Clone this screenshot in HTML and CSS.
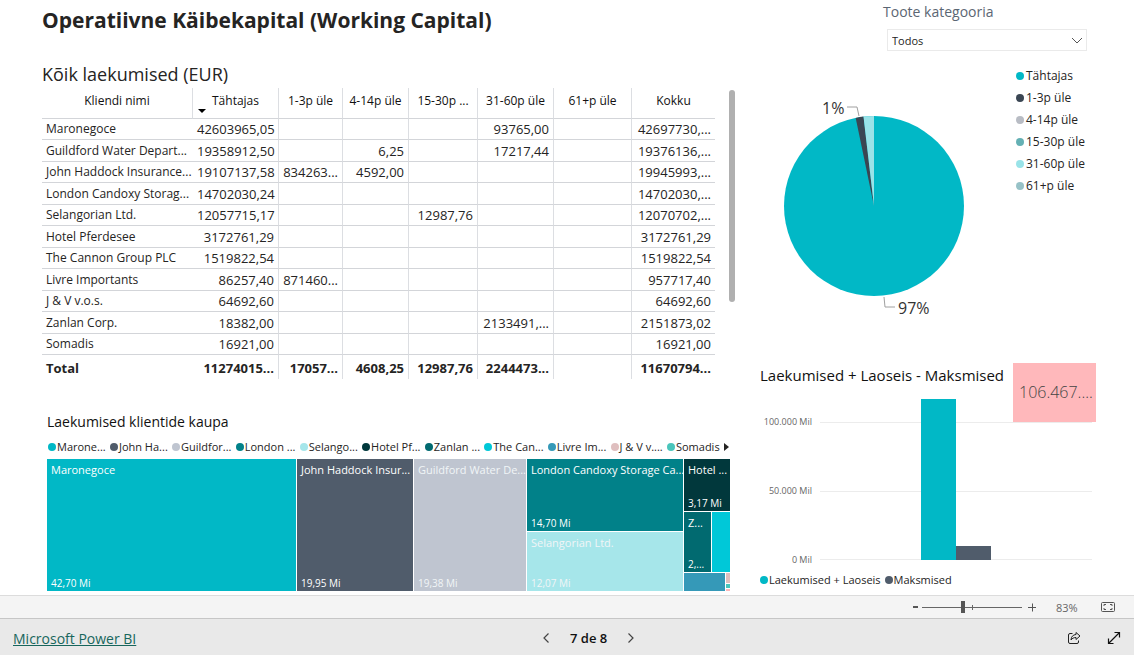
FILE: index.html
```html
<!DOCTYPE html>
<html lang="et">
<head>
<meta charset="utf-8">
<meta name="viewport" content="width=device-width, initial-scale=1">
<title>Operatiivne Käibekapital</title>
<link rel="stylesheet" href="styles.css">
</head>
<body>
<main class="report">
  <div class="col-main">
    <h1 class="report-title">Operatiivne Käibekapital (Working Capital)</h1>
    <section class="receipts">
      <h2 class="receipts-title">Kõik laekumised (EUR)</h2>
      <div class="receipts-body">
        <div class="matrix-wrap">
        <table class="matrix">
          <colgroup><col class="c-name"><col class="c-due"><col class="c-1"><col class="c-4"><col class="c-15"><col class="c-31"><col class="c-61"><col class="c-sum"></colgroup>
          <thead>
            <tr><th>Kliendi nimi</th><th class="sorted">Tähtajas<svg class="sort" viewBox="0 0 8 4" aria-hidden="true"><path d="M0 0h8L4 4z"/></svg></th><th>1-3p üle</th><th>4-14p üle</th><th>15-30p ...</th><th>31-60p üle</th><th>61+p üle</th><th>Kokku</th></tr>
          </thead>
          <tbody>
            <tr><td>Maronegoce</td><td>42603965,05</td><td></td><td></td><td></td><td>93765,00</td><td></td><td>42697730,...</td></tr>
            <tr><td>Guildford Water Depart...</td><td>19358912,50</td><td></td><td>6,25</td><td></td><td>17217,44</td><td></td><td>19376136,...</td></tr>
            <tr><td>John Haddock Insurance...</td><td>19107137,58</td><td>834263...</td><td>4592,00</td><td></td><td></td><td></td><td>19945993,...</td></tr>
            <tr><td>London Candoxy Storag...</td><td>14702030,24</td><td></td><td></td><td></td><td></td><td></td><td>14702030,...</td></tr>
            <tr><td>Selangorian Ltd.</td><td>12057715,17</td><td></td><td></td><td>12987,76</td><td></td><td></td><td>12070702,...</td></tr>
            <tr><td>Hotel Pferdesee</td><td>3172761,29</td><td></td><td></td><td></td><td></td><td></td><td>3172761,29</td></tr>
            <tr><td>The Cannon Group PLC</td><td>1519822,54</td><td></td><td></td><td></td><td></td><td></td><td>1519822,54</td></tr>
            <tr><td>Livre Importants</td><td>86257,40</td><td>871460...</td><td></td><td></td><td></td><td></td><td>957717,40</td></tr>
            <tr><td>J &amp; V v.o.s.</td><td>64692,60</td><td></td><td></td><td></td><td></td><td></td><td>64692,60</td></tr>
            <tr><td>Zanlan Corp.</td><td>18382,00</td><td></td><td></td><td></td><td>2133491,...</td><td></td><td>2151873,02</td></tr>
            <tr><td>Somadis</td><td>16921,00</td><td></td><td></td><td></td><td></td><td></td><td>16921,00</td></tr>
          </tbody>
          <tfoot>
            <tr><td>Total</td><td>11274015...</td><td>17057...</td><td>4608,25</td><td>12987,76</td><td>2244473...</td><td></td><td>11670794...</td></tr>
          </tfoot>
        </table>
        </div>
        <div class="scroll-track"><div class="scroll-thumb"></div></div>
      </div>
    </section>
    <section class="tree">
      <h3 class="chart-title">Laekumised klientide kaupa</h3>
      <ul class="legend tree-legend">
        <li><i class="dot teal"></i>Marone...</li>
        <li><i class="dot slate"></i>John Ha...</li>
        <li><i class="dot silver"></i>Guildfor...</li>
        <li><i class="dot sea"></i>London ...</li>
        <li><i class="dot ice"></i>Selango...</li>
        <li><i class="dot night"></i>Hotel Pf...</li>
        <li><i class="dot pine"></i>Zanlan ...</li>
        <li><i class="dot cyan"></i>The Can...</li>
        <li><i class="dot blue"></i>Livre Im...</li>
        <li><i class="dot rose"></i>J &amp; V v....</li>
        <li><i class="dot mint"></i>Somadis</li>
        <li><button class="plain" aria-label="Edasi"><svg width="5" height="8" viewBox="0 0 5 8"><path d="M0 0l5 4-5 4z" fill="#252423"/></svg></button></li>
      </ul>
      <div class="treemap">
        <div class="tile teal"><span>Maronegoce</span><b>42,70 Mi</b></div>
        <div class="tile slate"><span>John Haddock Insur...</span><b>19,95 Mi</b></div>
        <div class="tile silver"><span>Guildford Water De...</span><b>19,38 Mi</b></div>
        <div class="stack">
          <div class="tile sea"><span>London Candoxy Storage Ca...</span><b>14,70 Mi</b></div>
          <div class="tile ice"><span>Selangorian Ltd.</span><b>12,07 Mi</b></div>
        </div>
        <div class="stack small">
          <div class="tile night"><span>Hotel ...</span><b>3,17 Mi</b></div>
          <div class="pair mid">
            <div class="tile pine"><span>Z...</span><b>2,...</b></div>
            <div class="tile cyan"></div>
          </div>
          <div class="pair low">
            <div class="tile blue"></div>
            <div class="crumbs"><div class="rose"></div><div class="mint"></div><div class="pink"></div></div>
          </div>
        </div>
      </div>
    </section>
  </div>

  <div class="col-side">
    <div class="slicer">
      <label class="slicer-label" for="category">Toote kategooria</label>
      <div class="select-wrap">
        <select id="category"><option>Todos</option></select>
        <svg class="chevron" viewBox="0 0 12 7" aria-hidden="true"><path d="M1 1l5 5 5-5" fill="none" stroke="#555"/></svg>
      </div>
    </div>
    <section class="pie">
      <svg class="pie-chart" viewBox="0 0 250 230" role="img" aria-label="Tähtajas 97%, 1-3p üle 1%">
        <circle cx="114" cy="116" r="90" fill="#01b8c6"/>
        <path d="M114 116L95.700 27.900A90 90 0 0 1 103.500 26.600z" fill="#3a4653"/>
        <path d="M114 116L103.500 26.600A90 90 0 0 1 114 26z" fill="#99e3e8"/>
        <path d="M87 17h10l2 9M124 207l1 10h10" fill="none" stroke="#a0a0a0"/>
        <text class="pie-label" x="62" y="24">1%</text>
        <text class="pie-label" x="138" y="224">97%</text>
      </svg>
      <ul class="legend pie-legend">
        <li><i class="dot teal"></i>Tähtajas</li>
        <li><i class="dot ink"></i>1-3p üle</li>
        <li><i class="dot ash"></i>4-14p üle</li>
        <li><i class="dot jade"></i>15-30p üle</li>
        <li><i class="dot aqua"></i>31-60p üle</li>
        <li><i class="dot mist"></i>61+p üle</li>
      </ul>
    </section>
    <section class="bars">
      <h3 class="chart-title large">Laekumised + Laoseis - Maksmised</h3>
      <div class="kpi">106.467....</div>
      <div class="plot">
        <div class="axis"><span>100.000 Mil</span><span>50.000 Mil</span><span>0 Mil</span></div>
        <div class="gridlines"><i></i><i></i><i></i></div>
        <div class="columns"><div class="column teal" style="height:100%"></div><div class="column slate" style="height:9%"></div></div>
      </div>
      <ul class="legend bar-legend">
        <li><i class="dot teal"></i>Laekumised + Laoseis</li>
        <li><i class="dot slate"></i>Maksmised</li>
      </ul>
    </section>
  </div>
</main>

<div class="zoombar">
  <button class="plain" aria-label="Vähenda"><svg width="5" height="12"><path d="M0 6h5" stroke="#555" stroke-width="2"/></svg></button>
  <input class="zoom-range" type="range" min="0" max="100" value="41" aria-label="Suum">
  <button class="plain" aria-label="Suurenda"><svg width="8" height="12"><path d="M0 6.500h8M4.500 2.500v8" stroke="#555" fill="none"/></svg></button>
  <output class="zoom-value">83%</output>
  <button class="plain" aria-label="Mahuta lehele"><svg width="14" height="10" viewBox="0 0 14 10" fill="none" stroke="#555"><rect x=".5" y=".5" width="13" height="9" rx="1"/><path d="M5 2.500H3v1.500M5 7.500H3V6M9 2.500h2v1.500M9 7.500h2V6"/></svg></button>
</div>

<footer class="footer">
  <a class="brand" href="#">Microsoft Power BI</a>
  <nav class="pager">
    <button class="plain" aria-label="Eelmine"><svg width="8" height="10" viewBox="0 0 8 10"><path d="M6.500 0.500L2 5l4.500 4.500" fill="none" stroke="#444" stroke-width="1.200"/></svg></button>
    <span>7 de 8</span>
    <button class="plain" aria-label="Järgmine"><svg width="8" height="10" viewBox="0 0 8 10"><path d="M1.500 0.500L6 5 1.500 9.500" fill="none" stroke="#444" stroke-width="1.200"/></svg></button>
  </nav>
  <div class="actions">
    <button class="plain" aria-label="Jaga"><svg width="14" height="14" viewBox="0 0 14 14" fill="none" stroke="#222" stroke-linejoin="round"><path d="M5.500 2.500H3A1.500 1.500 0 0 0 1.500 4v7A1.500 1.500 0 0 0 3 12.500h7a1.500 1.500 0 0 0 1.500-1.500V9.500"/><path d="M9 1.500l4 3.500-4 3.500v-2C6.500 6.500 5 7.500 4 9c.200-3.500 2-5.200 5-5.500z"/></svg></button>
    <button class="plain" aria-label="Täisekraan"><svg width="14" height="14" viewBox="0 0 14 14" fill="none" stroke="#111" stroke-width="1.200"><path d="M1.500 12.500l11-11M7.500 1.500h5v5M1.500 7.500v5h5"/></svg></button>
  </div>
</footer>
</body>
</html>
```
FILE: styles.css
```css
* { box-sizing: border-box; }

body {
  margin: 0;
  min-height: 100vh;
  display: flex;
  flex-direction: column;
  background: #fff;
  color: #252423;
  font-family: "Open Sans", "Noto Sans", sans-serif;
  font-size: 12px;
}

h1, h2, h3, ul { margin: 0; padding: 0; }
ul { list-style: none; }

.plain {
  display: flex;
  align-items: center;
  padding: 0;
  border: 0;
  background: none;
}

/* Report canvas */
.report {
  flex: 1;
  display: grid;
  grid-template-columns: minmax(0, 693fr) minmax(0, 336fr);
  column-gap: 25px;
  padding: 0 38px 4px 42px;
}

.report-title { padding-top: 4px; font-size: 21px; line-height: 32px; white-space: nowrap; }
.receipts { padding-top: 26px; }
.receipts-title { font-size: 18px; font-weight: 400; line-height: 24px; padding-bottom: 2px; }
.receipts-body { display: flex; gap: 14px; }

/* Matrix */
.matrix-wrap { flex: 1; min-width: 0; }
.matrix {
  width: 100%;
  table-layout: fixed;
  border-collapse: separate;
  border-spacing: 0;
  white-space: nowrap;
}
.c-name { width: 151px; }
.c-due { width: 86px; }
.c-1 { width: 64px; }
.c-4 { width: 66px; }
.c-15 { width: 69px; }
.c-31 { width: 76px; }
.c-61 { width: 78px; }
.c-sum { width: 83px; }

.matrix th, .matrix td {
  padding: 0 4px;
  border-right: 1px solid #dcdee2;
  border-bottom: 1px solid #d3d5d9;
  line-height: 20px;
  font-weight: 400;
  text-align: right;
}
.matrix th:last-child, .matrix td:last-child { border-right: 0; }
.matrix th { height: 31px; padding: 3px 0 0; text-align: center; vertical-align: top; color: #111; }
.matrix tbody tr { height: 21px; }
.matrix tbody tr:nth-child(even) { height: 22px; }
.matrix td:first-child { border-right: 0; text-align: left; }
.matrix tfoot td { height: 24px; padding-top: 2px; border-bottom: 0; font-size: 13px; font-weight: 700; }
.matrix td:not(:first-child) { font-size: 13px; }
.sorted { position: relative; }
.sort { position: absolute; left: 5px; bottom: 5px; width: 8px; height: 4px; }

.scroll-track { width: 6px; padding-top: 2px; }
.scroll-thumb { height: 212px; border-radius: 3px; background: #b0b0b0; }

/* Treemap */
.tree { padding: 32px 5px 0; }
.chart-title { font-size: 14px; font-weight: 400; line-height: 22px; color: #111; }
.chart-title.large { font-size: 15px; }
.legend li { display: flex; align-items: center; gap: 1px; white-space: nowrap; }
.dot { flex: none; width: 8px; height: 8px; border-radius: 50%; }
.tree-legend {
  display: flex;
  justify-content: space-between;
  padding: 6px 1px 4px;
  font-size: 11px;
  line-height: 16px;
}
.treemap {
  display: grid;
  grid-template-columns: 249fr 116fr 112fr 156fr 46fr;
  gap: 1px;
  height: 132px;
}
.stack { display: grid; grid-template-rows: 72fr 59fr; gap: 1px; min-width: 0; }
.stack.small { grid-template-rows: 52fr 60fr 18fr; }
.pair { display: grid; gap: 1px; min-width: 0; min-height: 0; }
.mid { grid-template-columns: 26fr 18fr; }
.low { grid-template-columns: 40fr 4fr; }
.crumbs { display: grid; grid-template-rows: 11fr 4fr 2fr; gap: 1px; }
.tile {
  display: flex;
  flex-direction: column;
  justify-content: space-between;
  min-width: 0;
  min-height: 0;
  padding: 2px 4px 0;
  overflow: hidden;
  color: #fff;
  font-size: 11px;
  line-height: 18px;
  white-space: nowrap;
}
.tile b { font-size: 10px; font-weight: 400; line-height: 16px; }
.silver > span, .silver > b, .ice > span, .ice > b { color: #f1f5f7; }

.teal { background: #01b8c6; }
.slate { background: #505c6b; }
.silver { background: #bfc5d0; }
.sea { background: #018189; }
.ice { background: #a6e6ea; }
.night { background: #01383c; }
.pine { background: #016a70; }
.cyan { background: #00c8d8; }
.blue { background: #3599b8; }
.rose { background: #dfbfbf; }
.mint { background: #4ac5bb; }
.pink { background: #fdb9bb; }
.ink { background: #3a4653; }
.ash { background: #b8bcc4; }
.jade { background: #64b0b4; }
.aqua { background: #99e3e8; }
.mist { background: #97c2c7; }

/* Slicer */
.slicer { padding: 2px 9px 0 0; width: 213px; margin-left: auto; }
.slicer-label { display: block; font-size: 14px; line-height: 20px; color: #5b6673; }
.select-wrap { position: relative; margin: 7px 0 0 4px; }
.select-wrap select {
  display: block;
  width: 100%;
  height: 22px;
  padding: 0 4px;
  border: 1px solid #eaeaea;
  border-radius: 0;
  appearance: none;
  background: #fff;
  color: #252423;
  font-family: inherit;
  font-size: 11px;
}
.chevron { position: absolute; right: 4px; top: 8px; width: 12px; height: 7px; pointer-events: none; }

/* Pie */
.pie { display: flex; align-items: flex-start; gap: 6px; padding-top: 14px; }
.pie-chart { flex: 0 1 250px; min-width: 0; margin-top: 25px; }
.pie-label { font-size: 16px; fill: #333; }
.pie-legend { flex: none; line-height: 22px; }
.pie-legend li { gap: 2px; }

/* Column chart */
.bars { position: relative; padding-top: 44px; }
.kpi {
  position: absolute;
  z-index: 1;
  top: 43px;
  right: 0;
  width: 83px;
  padding: 0 6px;
  background: #ffb8bb;
  color: #444;
  font-size: 16px;
  font-weight: 300;
  line-height: 59px;
}
.plot {
  display: grid;
  grid-template-columns: 52px minmax(0, 1fr);
  column-gap: 8px;
  height: 161px;
  margin: 13px 4px 0 0;
}
.axis, .gridlines { display: flex; flex-direction: column; justify-content: space-between; }
.axis { margin: 16px 0 -7px; font-size: 9px; line-height: 14px; text-align: right; color: #666; white-space: nowrap; }
.gridlines { grid-area: 1 / 2; padding-top: 23px; }
.gridlines i { height: 1px; background: #ececec; }
.columns { grid-area: 1 / 2; display: flex; justify-content: center; align-items: flex-end; }
.column { width: 35px; }
.bar-legend { display: flex; gap: 4px; padding-top: 12px; font-size: 11px; line-height: 16px; }

/* Zoom bar */
.zoombar {
  display: flex;
  align-items: center;
  justify-content: flex-end;
  height: 23px;
  padding-right: 19px;
  border-top: 1px solid #dcdcdc;
  background: #f4f4f4;
  color: #666;
}
.zoom-range {
  width: 100px;
  height: 12px;
  margin: 0 6px 0 4px;
  appearance: none;
  background:
    linear-gradient(#666, #666) 50px 50% / 1px 5px no-repeat,
    linear-gradient(#666, #666) 0 50% / 100% 1px no-repeat;
}
.zoom-range::-webkit-slider-thumb {
  appearance: none;
  width: 4px;
  height: 12px;
  background: #555;
}
.zoom-value { width: 24px; margin: 0 21px 0 20px; font-size: 11px; }

/* Footer */
.footer {
  display: flex;
  align-items: center;
  justify-content: space-between;
  height: 37px;
  padding: 2px 13px 0;
  border-top: 1px solid #c6c6c6;
  background: #e9e9e9;
}
.brand { font-size: 14px; color: #17665c; }
.pager { display: flex; align-items: center; gap: 20px; margin-right: 26px; color: #111; font-size: 13px; font-weight: 600; }
.actions { display: flex; align-items: center; gap: 26px; }
```
